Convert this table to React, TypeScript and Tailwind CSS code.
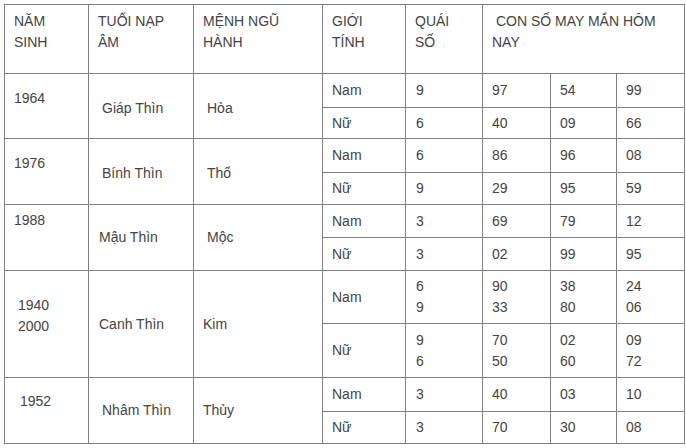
import React from "react";

type Group = {
  year: React.ReactNode;
  yearCls: string;
  tuoi: string;
  tuoiCls: string;
  menh: string;
  menhCls: string;
  rows: { h: string; gender: string; qs: React.ReactNode; a: React.ReactNode; b: React.ReactNode; c: React.ReactNode }[];
};

const two = (x: string, y: string) => (
  <>
    {x}
    <br />
    {y}
  </>
);

const groups: Group[] = [
  {
    year: "1964",
    yearCls: "pt-[14px] pl-[9px]",
    tuoi: "Giáp Thìn",
    tuoiCls: "pl-[13px] pt-[4px]",
    menh: "Hỏa",
    menhCls: "pl-[13px] pt-[4px]",
    rows: [
      { h: "h-[34px]", gender: "Nam", qs: "9", a: "97", b: "54", c: "99" },
      { h: "h-[31px]", gender: "Nữ", qs: "6", a: "40", b: "09", c: "66" },
    ],
  },
  {
    year: "1976",
    yearCls: "pt-[14px] pl-[9px]",
    tuoi: "Bính Thìn",
    tuoiCls: "pl-[13px] pt-[3px]",
    menh: "Thổ",
    menhCls: "pl-[13px] pt-[3px]",
    rows: [
      { h: "h-[34px]", gender: "Nam", qs: "6", a: "86", b: "96", c: "08" },
      { h: "h-[32px]", gender: "Nữ", qs: "9", a: "29", b: "95", c: "59" },
    ],
  },
  {
    year: "1988",
    yearCls: "pt-[5px] pl-[9px]",
    tuoi: "Mậu Thìn",
    tuoiCls: "pl-[10px]",
    menh: "Mộc",
    menhCls: "pl-[13px]",
    rows: [
      { h: "h-[33px]", gender: "Nam", qs: "3", a: "69", b: "79", c: "12" },
      { h: "h-[33px]", gender: "Nữ", qs: "3", a: "02", b: "99", c: "95" },
    ],
  },
  {
    year: two("1940", "2000"),
    yearCls: "pt-[24px] pl-[13px]",
    tuoi: "Canh Thìn",
    tuoiCls: "pl-[10px]",
    menh: "Kim",
    menhCls: "pl-[9px]",
    rows: [
      { h: "h-[53px]", gender: "Nam", qs: two("6", "9"), a: two("90", "33"), b: two("38", "80"), c: two("24", "06") },
      { h: "h-[54px]", gender: "Nữ", qs: two("9", "6"), a: two("70", "50"), b: two("02", "60"), c: two("09", "72") },
    ],
  },
  {
    year: "1952",
    yearCls: "pt-[13px] pl-[15px]",
    tuoi: "Nhâm Thìn",
    tuoiCls: "pl-[13px]",
    menh: "Thủy",
    menhCls: "pl-[9px]",
    rows: [
      { h: "h-[34px]", gender: "Nam", qs: "3", a: "40", b: "03", c: "10" },
      { h: "h-[32px]", gender: "Nữ", qs: "3", a: "70", b: "30", c: "08" },
    ],
  },
];

const bd = "border border-[#808080]";

export default function App() {
  return (
    <div
      className="w-[686px] h-[448px] bg-white pt-[4px] pl-[4px] text-[14px] leading-[21px] text-[#444444]"
      style={{ fontFamily: '"Liberation Sans", Arial, sans-serif' }}
    >
      <table className="table-fixed border-collapse w-[680px]">
        <colgroup>
          <col className="w-[84px]" />
          <col className="w-[105px]" />
          <col className="w-[129px]" />
          <col className="w-[83px]" />
          <col className="w-[77px]" />
          <col className="w-[68px]" />
          <col className="w-[66px]" />
          <col className="w-[68px]" />
        </colgroup>
        <thead>
          <tr className="h-[69px]">
            <th className={`${bd} align-top text-left font-normal pt-[6px] px-[9px]`}>
              NĂM
              <br />
              SINH
            </th>
            <th className={`${bd} align-top text-left font-normal pt-[6px] px-[9px]`}>
              TUỔI NẠP
              <br />
              ÂM
            </th>
            <th className={`${bd} align-top text-left font-normal pt-[6px] px-[9px]`}>
              MỆNH NGŨ
              <br />
              HÀNH
            </th>
            <th className={`${bd} align-top text-left font-normal pt-[6px] px-[9px]`}>
              GIỚI
              <br />
              TÍNH
            </th>
            <th className={`${bd} align-top text-left font-normal pt-[6px] px-[9px]`}>
              QUÁI
              <br />
              SỐ
            </th>
            <th colSpan={3} className={`${bd} align-top text-left font-normal pt-[6px] px-[9px]`}>
              {"\u00a0"}CON SỐ MAY MẮN HÔM
              <br />
              NAY
            </th>
          </tr>
        </thead>
        <tbody>
          {groups.map((g, gi) =>
            g.rows.map((r, ri) => (
              <tr key={`${gi}-${ri}`} className={r.h}>
                {ri === 0 && (
                  <>
                    <td rowSpan={2} className={`${bd} align-top text-left p-0 ${g.yearCls}`}>
                      {g.year}
                    </td>
                    <td rowSpan={2} className={`${bd} align-middle text-left p-0 ${g.tuoiCls}`}>
                      {g.tuoi}
                    </td>
                    <td rowSpan={2} className={`${bd} align-middle text-left p-0 ${g.menhCls}`}>
                      {g.menh}
                    </td>
                  </>
                )}
                <td className={`${bd} align-middle px-[9px] py-0`}>{r.gender}</td>
                <td className={`${bd} align-middle px-[10px] py-0`}>{r.qs}</td>
                <td className={`${bd} align-middle px-[9px] py-0`}>{r.a}</td>
                <td className={`${bd} align-middle px-[9px] py-0`}>{r.b}</td>
                <td className={`${bd} align-middle px-[9px] py-0`}>{r.c}</td>
              </tr>
            ))
          )}
        </tbody>
      </table>
    </div>
  );
}
